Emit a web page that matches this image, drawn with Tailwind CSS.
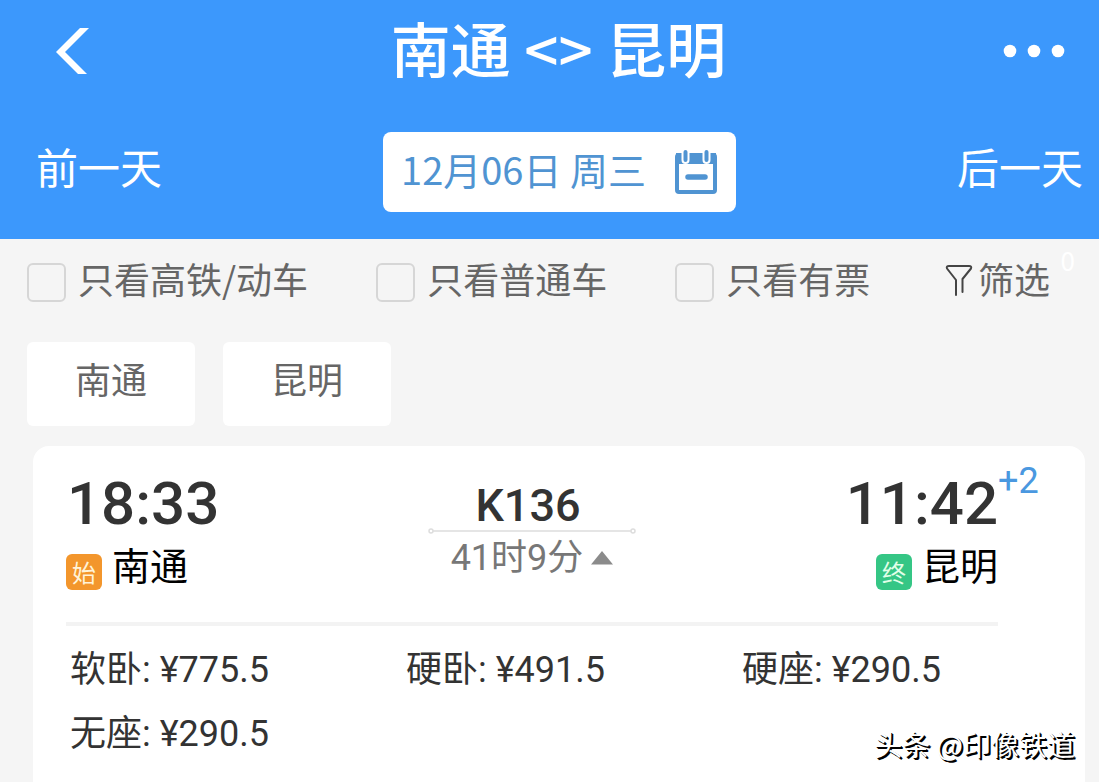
<!DOCTYPE html>
<html lang="zh-CN">
<head>
<meta charset="utf-8">
<meta name="viewport" content="width=device-width, initial-scale=1">
<title>南通 - 昆明</title>
<script src="https://cdn.jsdelivr.net/npm/@tailwindcss/browser@4"></script>
</head>
<body class="relative flex min-h-screen flex-col bg-[#f5f5f5] font-['Noto_Sans_CJK_SC',sans-serif] text-[#666]">

<header class="bg-[#3c98fc] pb-[27px] text-white">
  <div class="grid h-[102px] grid-cols-[1fr_auto_1fr] items-center pl-14 pr-[34px]">
    <button type="button" aria-label="返回" class="justify-self-start">
      <svg class="block" width="34" height="48" viewBox="0 0 34 48" fill="currentColor"><path d="M24 1h9L9 25l22 22h-9L0 25z"/></svg>
    </button>
    <h1 class="pb-2 pr-1 text-[60px] font-medium leading-[88px]">南通 &lt;&gt; 昆明</h1>
    <button type="button" aria-label="更多" class="justify-self-end">
      <svg class="block" width="62" height="14" viewBox="0 0 62 14" fill="currentColor"><circle cx="7" cy="7" r="6.3"/><circle cx="31" cy="7" r="6.3"/><circle cx="55" cy="7" r="6.3"/></svg>
    </button>
  </div>
  <nav class="mt-[30px] grid grid-cols-[1fr_auto_1fr] items-center pl-9 pr-4">
    <button type="button" class="justify-self-start pb-3 text-[42px] leading-[64px]">前一天</button>
    <button type="button" class="flex h-20 items-center gap-7 rounded-lg bg-white px-[18px] text-[#5094d2]">
      <span class="pb-1.5 text-[38px] leading-[64px]">12月06日 周三</span>
      <svg class="block" width="44" height="48" viewBox="0 0 44 48" fill="none">
        <rect x="3" y="7" width="38" height="37" rx="2" stroke="currentColor" stroke-width="4"/>
        <path d="M2 5h40v11H2z" fill="currentColor"/>
        <path d="M11.500 4v8M32.500 4v8" stroke="#fff" stroke-width="8" stroke-linecap="round"/>
        <path d="M11.500 4v8M32.500 4v8" stroke="currentColor" stroke-width="4" stroke-linecap="round"/>
        <path d="M14 29h17" stroke="currentColor" stroke-width="5.500" stroke-linecap="round"/>
      </svg>
    </button>
    <button type="button" class="justify-self-end pb-3 text-[42px] leading-[64px]">后一天</button>
  </nav>
</header>

<main class="flex grow flex-col">
  <form class="relative flex items-center pl-[27px] pr-[49px] pt-4 text-[36px] leading-[54px]">
    <div class="flex gap-[68px]">
      <label class="flex items-center gap-3"><input type="checkbox" class="mt-1 size-[39px] appearance-none rounded-md border-2 border-[#d6d6d6] checked:bg-[#3c98fc]"><span class="-mt-1">只看高铁/动车</span></label>
      <label class="flex items-center gap-3"><input type="checkbox" class="mt-1 size-[39px] appearance-none rounded-md border-2 border-[#d6d6d6] checked:bg-[#3c98fc]"><span class="-mt-1">只看普通车</span></label>
      <label class="flex items-center gap-3"><input type="checkbox" class="mt-1 size-[39px] appearance-none rounded-md border-2 border-[#d6d6d6] checked:bg-[#3c98fc]"><span class="-mt-1">只看有票</span></label>
    </div>
    <button type="button" class="ml-auto flex items-center gap-1">
      <svg class="block" width="30" height="34" viewBox="0 0 30 34" fill="none" stroke="#444" stroke-width="2" stroke-linecap="round" stroke-linejoin="round"><path d="M12 32V17L3 5.500Q2 3 5 3h20q3 0 2 2.500L18.500 16v13"/></svg>
      <span class="-mt-1">筛选</span>
    </button>
    <span class="absolute right-6 top-1 text-[26px] leading-[34px] text-white">0</span>
  </form>

  <div class="mt-[37px] flex gap-7 pl-[27px] text-[36px] leading-[54px]">
    <button type="button" class="h-[84px] rounded-md bg-white px-12 pb-3">南通</button>
    <button type="button" class="h-[84px] rounded-md bg-white px-12 pb-3">昆明</button>
  </div>

  <article class="ml-[33px] mr-[14px] mt-5 grow rounded-t-2xl bg-white pl-[33px] pr-[87px] pt-7 text-[#333]">
    <div class="grid grid-cols-3 border-b-4 border-[#f3f3f3] pb-7">
      <section>
        <p class="pl-px font-['Roboto',sans-serif] text-[60px] font-medium leading-[60px]">18:33</p>
        <p class="flex items-center gap-2.5 text-[38px] leading-[60px] text-black">
          <span class="mt-4 size-9 rounded-md bg-[#f3962c] text-center text-[24px] leading-9 text-[#fff3d8]">始</span>南通
        </p>
      </section>
      <section class="flex flex-col items-center">
        <h2 class="mt-2 pr-2 font-['Roboto',sans-serif] text-[45px] font-medium leading-[48px]">K136</h2>
        <svg class="-mt-0.5 block" width="208" height="6" viewBox="0 0 208 6" fill="#fff" stroke="#ddd" stroke-width="1.500"><path d="M5 3h198"/><circle cx="3" cy="3" r="2"/><circle cx="205" cy="3" r="2"/></svg>
        <button type="button" class="flex items-center gap-2 font-['Roboto','Noto_Sans_CJK_SC',sans-serif] text-[36px] leading-[48px] text-[#777]">41时9分
          <svg class="block" width="22" height="14" viewBox="0 0 22 14" fill="#8b8b8b"><path d="M11 0l11 13.500H0z"/></svg>
        </button>
      </section>
      <section class="flex flex-col items-end">
        <p class="relative font-['Roboto',sans-serif] text-[60px] font-medium leading-[60px]">11:42<sup class="absolute left-full top-[-11px] text-[36px] font-normal leading-[36px] text-[#4a98e0]">+2</sup></p>
        <p class="flex items-center gap-2.5 text-[38px] leading-[60px] text-black">
          <span class="mt-4 size-9 rounded-md bg-[#35c685] text-center text-[24px] leading-9 text-[#e2ffe9]">终</span>昆明
        </p>
      </section>
    </div>
    <ul class="-mr-20 grid grid-cols-3 pl-1 pt-3 font-['Roboto','Noto_Sans_CJK_SC',sans-serif] text-[36px] leading-[64px]">
      <li>软卧: ¥775.5</li>
      <li>硬卧: ¥491.5</li>
      <li>硬座: ¥290.5</li>
      <li>无座: ¥290.5</li>
    </ul>
  </article>
</main>

<p class="absolute bottom-[18px] right-6 text-[28px] leading-[40px] text-white [text-shadow:1px_1px_0_#000,2px_2px_0_#000]">头条 @印像铁道</p>
</body>
</html>
